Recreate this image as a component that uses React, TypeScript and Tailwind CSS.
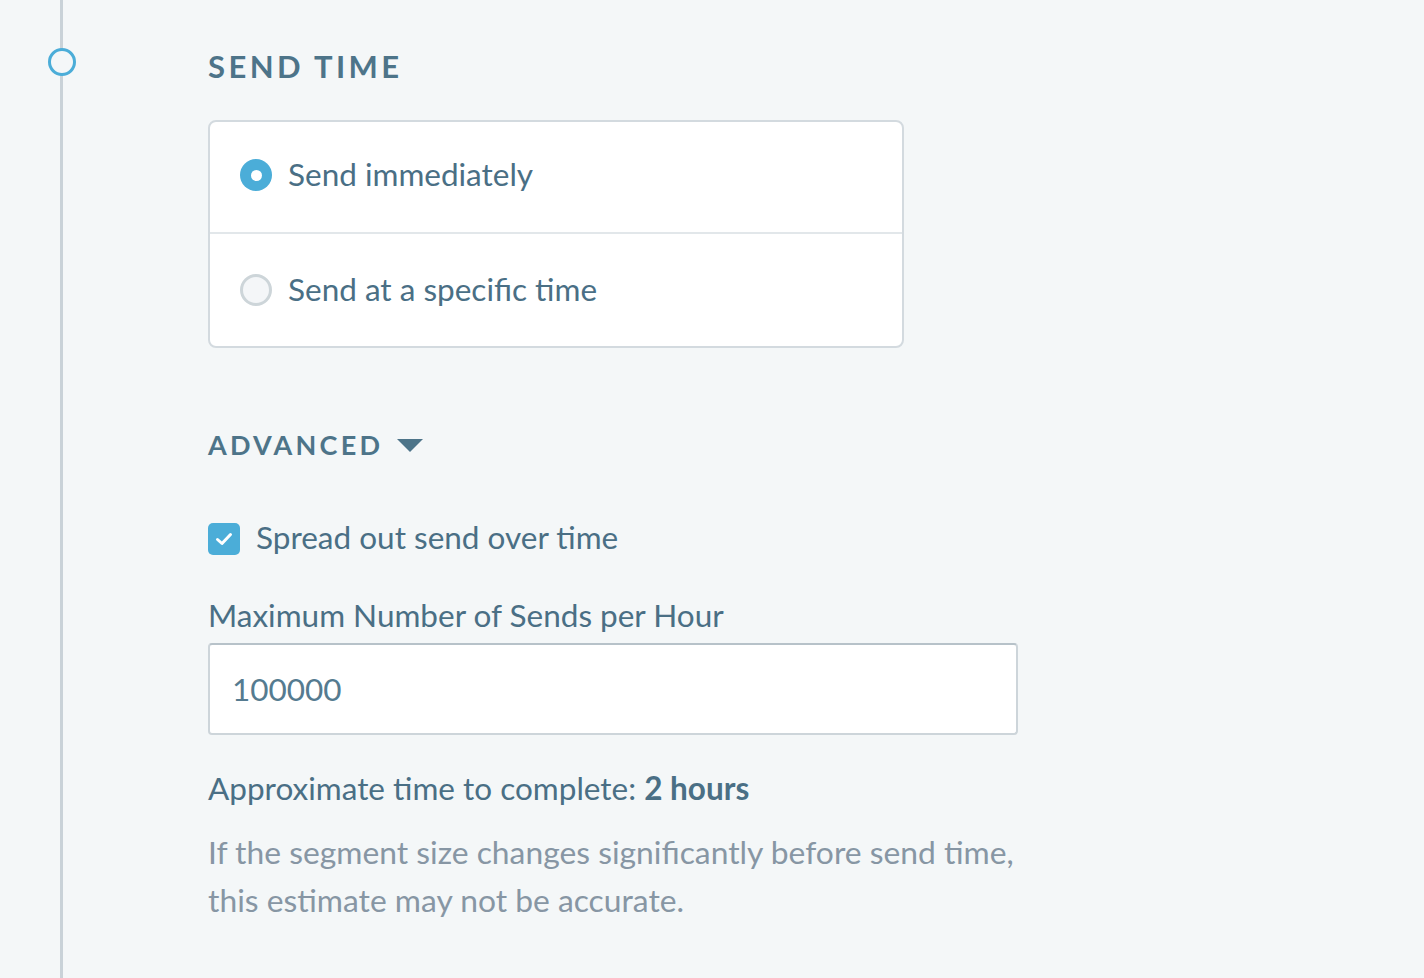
import React from "react";

export default function App() {
  return (
    <div
      className="relative w-[1424px] h-[978px] bg-[#f4f7f8] overflow-hidden text-[#4a6f85]"
      style={{ fontFamily: "Lato, 'Noto Sans', sans-serif" }}
    >
      <div className="absolute left-[60px] top-0 w-[3px] h-full bg-[#c9d2d8]" />
      <div className="absolute left-[48px] top-[48px] w-[28px] h-[28px] rounded-full border-[3px] border-[#4badd8] bg-[#f4f7f8]" />

      <div className="pl-[208px] pt-[46px] flex flex-col">
        <h2 className="text-[31px] leading-[40px] font-bold tracking-[0.11em] text-[#4d7489]">SEND TIME</h2>

        <div className="mt-[34px] w-[696px] bg-white border-2 border-[#d3dadf] rounded-[8px] flex flex-col">
          <div className="h-[112px] flex items-center pl-[30px] gap-[16px] border-b-2 border-[#e2e7ea]">
            <span className="w-[32px] h-[32px] rounded-full bg-[#4badd8] flex items-center justify-center -translate-y-[2px]">
              <span className="w-[11px] h-[11px] rounded-full bg-white" />
            </span>
            <span className="text-[31.5px] leading-[40px] -translate-y-[3px]">Send immediately</span>
          </div>
          <div className="h-[112px] flex items-center pl-[30px] gap-[16px]">
            <span className="w-[32px] h-[32px] rounded-full bg-[#f4f6f8] border-[3px] border-[#cdd5d9]" />
            <span className="text-[31.5px] leading-[40px] -translate-y-[1px]">Send at a specific time</span>
          </div>
        </div>

        <div className="mt-[79px] flex items-center gap-[14px]">
          <span className="text-[27px] leading-[36px] font-bold tracking-[0.12em] text-[#4d7489]">ADVANCED</span>
          <svg width="26" height="13" viewBox="0 0 26 13">
            <path d="M0 0 L26 0 L13 13 Z" fill="#4d7489" />
          </svg>
        </div>

        <div className="mt-[56px] flex items-center gap-[16px]">
          <span className="w-[32px] h-[32px] rounded-[5px] bg-[#4badd8] flex items-center justify-center">
            <svg width="32" height="32" viewBox="0 0 32 32">
              <path d="M9.5 16.5 L14 20.5 L22.5 11.5" fill="none" stroke="white" strokeWidth="3" strokeLinecap="round" strokeLinejoin="round" />
            </svg>
          </span>
          <span className="text-[31.5px] leading-[40px] -translate-y-[2px]">Spread out send over time</span>
        </div>

        <label className="mt-[36px] text-[31.5px] leading-[40px]">Maximum Number of Sends per Hour</label>

        <div className="mt-[8px] w-[810px] h-[92px] bg-white border-2 border-[#cdd5da] border-t-[#b7c2c9] rounded-[4px] flex items-center pl-[22px]">
          <span className="text-[31.5px] leading-[40px] text-[#557b90]">100000</span>
        </div>

        <p className="mt-[33px] text-[31.5px] leading-[40px]">
          Approximate time to complete: <span className="font-bold">2 hours</span>
        </p>

        <p className="mt-[20px] text-[31.8px] leading-[48px] text-[#8796a4] w-[860px]">
          If the segment size changes significantly before send time,
          <br />
          this estimate may not be accurate.
        </p>
      </div>
    </div>
  );
}
